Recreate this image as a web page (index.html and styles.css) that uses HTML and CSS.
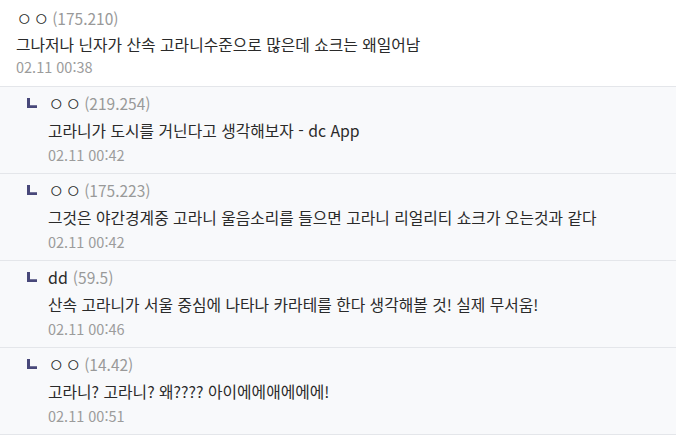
FILE: index.html
```html
<!DOCTYPE html>
<html lang="ko">
<head>
<meta charset="utf-8">
<link rel="stylesheet" href="styles.css">
</head>
<body>
<ul class="comments">
  <li class="comment">
    <div class="head"><span class="nick jamo">ㅇㅇ</span><span class="ip">(175.210)</span></div>
    <p class="text">그나저나 닌자가 산속 고라니수준으로 많은데 쇼크는 왜일어남</p>
    <div class="date">02.11 00:38</div>
  </li>
  <li class="comment reply">
    <div class="head"><svg class="re" viewBox="0 0 10 10" width="10" height="10"><path d="M0 0h3v7.2H10V10H0z" fill="#48487a"/></svg><span class="nick jamo">ㅇㅇ</span><span class="ip">(219.254)</span></div>
    <p class="text">고라니가 도시를 거닌다고 생각해보자 - dc App</p>
    <div class="date">02.11 00:42</div>
  </li>
  <li class="comment reply">
    <div class="head"><svg class="re" viewBox="0 0 10 10" width="10" height="10"><path d="M0 0h3v7.2H10V10H0z" fill="#48487a"/></svg><span class="nick jamo">ㅇㅇ</span><span class="ip">(175.223)</span></div>
    <p class="text">그것은 야간경계중 고라니 울음소리를 들으면 고라니 리얼리티 쇼크가 오는것과 같다</p>
    <div class="date">02.11 00:42</div>
  </li>
  <li class="comment reply">
    <div class="head"><svg class="re" viewBox="0 0 10 10" width="10" height="10"><path d="M0 0h3v7.2H10V10H0z" fill="#48487a"/></svg><span class="nick">dd</span><span class="ip">(59.5)</span></div>
    <p class="text">산속 고라니가 서울 중심에 나타나 카라테를 한다 생각해볼 것! 실제 무서움!</p>
    <div class="date">02.11 00:46</div>
  </li>
  <li class="comment reply">
    <div class="head"><svg class="re" viewBox="0 0 10 10" width="10" height="10"><path d="M0 0h3v7.2H10V10H0z" fill="#48487a"/></svg><span class="nick jamo">ㅇㅇ</span><span class="ip">(14.42)</span></div>
    <p class="text">고라니? 고라니? 왜???? 아이에에애에에에!</p>
    <div class="date">02.11 00:51</div>
  </li>
</ul>
</body>
</html>
```
FILE: styles.css
```css
* { box-sizing: border-box; }
html, body { margin: 0; padding: 0; background: #fff; }
body {
  font-family: "Noto Sans CJK KR", "Noto Sans", sans-serif;
  color: #2a2a2a;
}
.comments { list-style: none; margin: 0; padding: 0; }
.comment {
  padding: 6px 16px 9px;
  border-bottom: 1px solid #e4e6ea;
}
.reply {
  background: #f8f9fb;
  padding: 4px 16px 9px 27px;
  height: 87px;
}
.head {
  display: flex;
  align-items: center;
  height: 24px;
}
.re { margin-right: 11px; flex: none; }
.nick { font-size: 16px; line-height: 24px; margin-right: 5px; }
.nick.jamo { font-size: 18px; font-weight: 300; letter-spacing: 0.5px; margin-right: 2px; }
.ip { color: #999; font-size: 15.5px; }
.text {
  margin: 3px 0 0;
  font-size: 15.8px;
  line-height: 24px;
}
.reply .text { margin-left: 21px; margin-top: 4px; }
.date {
  font-size: 14.5px;
  line-height: 20px;
  color: #9c9c9c;
}
.reply .date { margin-left: 21px; margin-top: 2px; }
```
